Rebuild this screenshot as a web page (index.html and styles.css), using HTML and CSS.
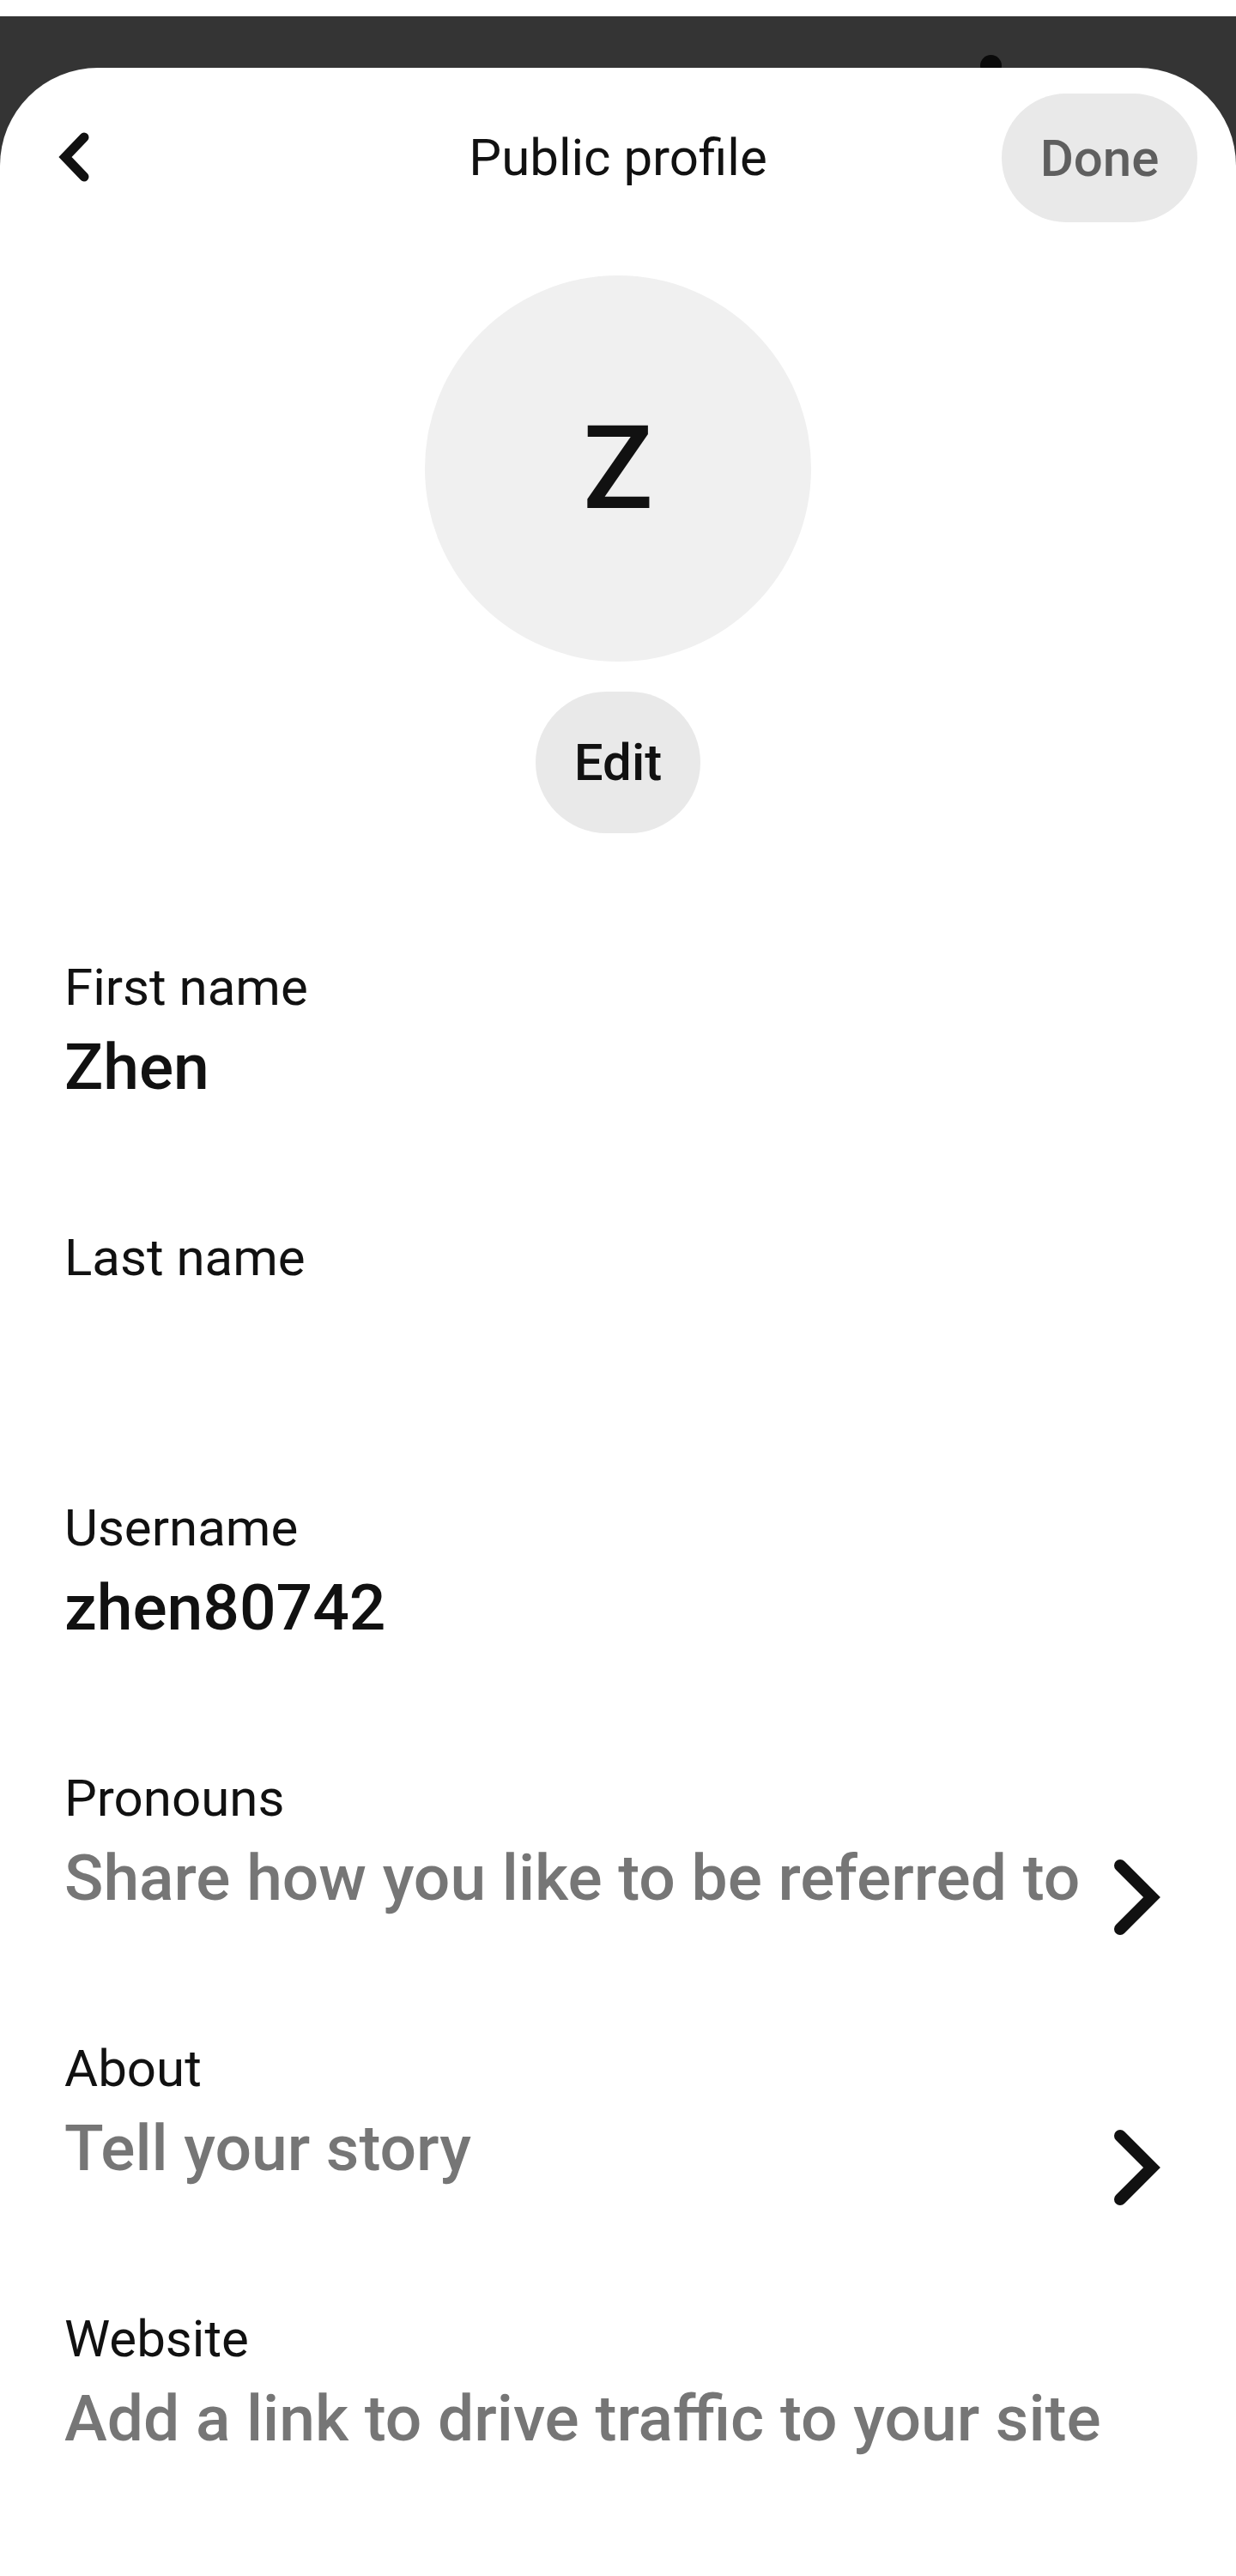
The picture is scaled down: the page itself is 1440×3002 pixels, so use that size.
FILE: index.html
```html
<!DOCTYPE html>
<html lang="en">
<head>
<meta charset="utf-8">
<title>Public profile</title>
<link rel="stylesheet" href="styles.css">
</head>
<body>
<div class="frame">
  <div class="camera"></div>
  <main class="sheet">
    <header class="header">
      <button class="back" aria-label="Back">
        <svg width="60" height="80" viewBox="0 0 60 80"><polyline points="53,16 31,39 53,62" fill="none" stroke="#111" stroke-width="11" stroke-linecap="round" stroke-linejoin="miter"/></svg>
      </button>
      <h1 class="title">Public profile</h1>
      <div class="header-right"><button class="done">Done</button></div>
    </header>

    <section class="photo">
      <div class="avatar">Z</div>
      <button class="edit">Edit</button>
    </section>

    <section class="fields">
      <div class="field">
        <div class="label">First name</div>
        <div class="value">Zhen</div>
      </div>
      <div class="field">
        <div class="label">Last name</div>
        <div class="value"></div>
      </div>
      <div class="field">
        <div class="label">Username</div>
        <div class="value">zhen80742</div>
      </div>
      <div class="field">
        <div class="label">Pronouns</div>
        <div class="value-row">
          <div class="value placeholder">Share how you like to be referred to</div>
          <svg class="chev" width="70" height="100" viewBox="0 0 70 100"><polyline points="15,13 52,50 15,87" fill="none" stroke="#111" stroke-width="14" stroke-linecap="round" stroke-linejoin="miter"/></svg>
        </div>
      </div>
      <div class="field">
        <div class="label">About</div>
        <div class="value-row">
          <div class="value placeholder">Tell your story</div>
          <svg class="chev" width="70" height="100" viewBox="0 0 70 100"><polyline points="15,13 52,50 15,87" fill="none" stroke="#111" stroke-width="14" stroke-linecap="round" stroke-linejoin="miter"/></svg>
        </div>
      </div>
      <div class="field">
        <div class="label">Website</div>
        <div class="value placeholder">Add a link to drive traffic to your site</div>
      </div>
    </section>
  </main>
</div>
</body>
</html>
```
FILE: styles.css
```css
* { box-sizing: border-box; }
html, body { margin: 0; padding: 0; }
body {
  background: #ffffff;
  font-family: Roboto, "Liberation Sans", Arial, sans-serif;
  color: #111111;
  padding-top: 19px;
}
button {
  font-family: inherit;
  border: none;
  margin: 0;
  padding: 0;
  cursor: pointer;
}
.frame {
  position: relative;
  background: #343434;
  padding-top: 60px;
  min-height: calc(100vh - 19px);
  display: flex;
  flex-direction: column;
}
.camera {
  position: absolute;
  left: 1142px;
  top: 45px;
  width: 25px;
  height: 25px;
  border-radius: 50%;
  background: #0a0a0a;
}
.sheet {
  position: relative;
  flex: 1;
  background: #ffffff;
  border-radius: 114px 114px 0 0;
}
.header {
  display: grid;
  grid-template-columns: 1fr auto 1fr;
  align-items: center;
  padding: 30px 45px 0;
  height: 180px;
}
.back {
  background: transparent;
  width: 60px;
  height: 80px;
  display: flex;
}
.title {
  margin: 0;
  font-size: 60px;
  font-weight: 400;
  line-height: 70px;
  color: #111;
  white-space: nowrap;
}
.header-right {
  display: flex;
  justify-content: flex-end;
}
.done {
  width: 228px;
  height: 150px;
  border-radius: 75px;
  background: #e9e9e9;
  color: #5f5f5f;
  font-size: 60px;
  font-weight: 500;
}
.photo {
  display: flex;
  flex-direction: column;
  align-items: center;
  padding-top: 62px;
}
.avatar {
  width: 450px;
  height: 450px;
  border-radius: 50%;
  background: #f0f0f0;
  display: flex;
  align-items: center;
  justify-content: center;
  font-size: 136px;
  font-weight: 500;
  line-height: 1;
  color: #111;
}
.edit {
  margin-top: 35px;
  width: 192px;
  height: 165px;
  border-radius: 83px;
  background: #e9e9e9;
  color: #111;
  font-size: 60px;
  font-weight: 500;
}
.fields {
  display: flex;
  flex-direction: column;
  gap: 145px;
  padding: 145px 80px 0 75px;
}
.field {
  display: flex;
  flex-direction: column;
  gap: 14px;
}
.label {
  font-size: 60px;
  line-height: 70px;
  font-weight: 400;
  color: #111;
}
.value {
  font-size: 75px;
  line-height: 86px;
  min-height: 86px;
  font-weight: 500;
  color: #111;
  white-space: nowrap;
}
.value.placeholder {
  color: #767676;
}
.value-row {
  display: flex;
  justify-content: space-between;
  align-items: flex-start;
  height: 86px;
}
.value-row .value {
  min-width: 0;
}
.chev {
  flex: none;
  margin-top: 16px;
}
```
